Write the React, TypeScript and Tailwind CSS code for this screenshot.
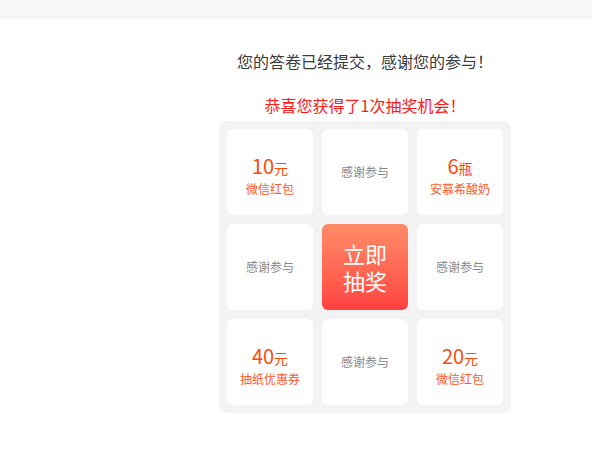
import React from "react";

type Prize = { amount?: string; unit?: string; label: string };

const prizes: (Prize | null)[] = [
  { amount: "10", unit: "元", label: "微信红包" },
  { label: "感谢参与" },
  { amount: "6", unit: "瓶", label: "安慕希酸奶" },
  { label: "感谢参与" },
  null,
  { label: "感谢参与" },
  { amount: "40", unit: "元", label: "抽纸优惠券" },
  { label: "感谢参与" },
  { amount: "20", unit: "元", label: "微信红包" },
];

const Cell = ({ item }: { item: Prize }) => (
  <div className="h-[86px] bg-white rounded-md flex flex-col items-center justify-center">
    {item.amount ? (
      <div className="pt-[10px] flex flex-col items-center">
        <p className="text-[#ff4a0a] leading-[22px]">
          <span className="text-[20px]">{item.amount}</span>
          <span className="text-[14px]">{item.unit}</span>
        </p>
        <p className="text-[#ff5a2a] text-[12px] leading-[20px]">{item.label}</p>
      </div>
    ) : (
      <p className="text-[#888888] text-[12px]">{item.label}</p>
    )}
  </div>
);

const App = () => {
  return (
    <div className="min-h-[454px] bg-white font-['Microsoft_YaHei','Noto_Sans_CJK_SC',sans-serif]">
      <div className="h-[19px] bg-[#f7f7f7]" />
      <div className="ml-[219px] w-[292px] flex flex-col items-center">
        <p className="mt-[30px] text-[16px] leading-[24px] text-[#3a3a3a]">
          您的答卷已经提交，感谢您的参与！
        </p>
        <p className="mt-[20px] text-[16px] leading-[24px] text-[#ff1a1a]">
          恭喜您获得了1次抽奖机会！
        </p>
        <div className="mt-[4px] w-[292px] bg-[#f3f3f3] rounded-lg p-2 grid grid-cols-3 gap-[9px]">
          {prizes.map((item, i) =>
            item ? (
              <Cell key={i} item={item} />
            ) : (
              <button
                key={i}
                className="h-[86px] rounded-md bg-gradient-to-b from-[#ff8b68] to-[#ff4040] text-white text-[22px] leading-[27px] flex flex-col items-center justify-center"
              >
                <span>立即</span>
                <span>抽奖</span>
              </button>
            )
          )}
        </div>
      </div>
    </div>
  );
};

export default App;
